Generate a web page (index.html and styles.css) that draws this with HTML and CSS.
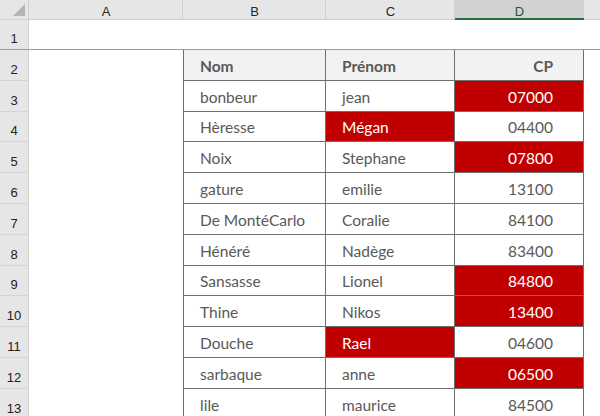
FILE: index.html
```html
<!DOCTYPE html>
<html lang="fr">
<head>
<meta charset="utf-8">
<link rel="stylesheet" href="styles.css">
</head>
<body>
<div class="sheet">
  <div class="corner"><span class="tri"></span></div>
  <div class="ch">A</div>
  <div class="ch">B</div>
  <div class="ch">C</div>
  <div class="ch sel">D</div>
  <div class="ch last"></div>

  <div class="rh r1">1</div>
  <div class="c r1"></div><div class="c r1"></div><div class="c r1"></div><div class="c r1"></div><div class="c r1"></div>

  <div class="rh">2</div>
  <div class="c"></div>
  <div class="t th first">Nom</div>
  <div class="t th">Prénom</div>
  <div class="t th num">CP</div>
  <div class="c"></div>

  <div class="rh">3</div><div class="c"></div>
  <div class="t first">bonbeur</div><div class="t">jean</div><div class="t num red">07000</div><div class="c"></div>

  <div class="rh">4</div><div class="c"></div>
  <div class="t first">Hèresse</div><div class="t red">Mégan</div><div class="t num">04400</div><div class="c"></div>

  <div class="rh">5</div><div class="c"></div>
  <div class="t first">Noix</div><div class="t">Stephane</div><div class="t num red">07800</div><div class="c"></div>

  <div class="rh">6</div><div class="c"></div>
  <div class="t first">gature</div><div class="t">emilie</div><div class="t num">13100</div><div class="c"></div>

  <div class="rh">7</div><div class="c"></div>
  <div class="t first">De MontéCarlo</div><div class="t">Coralie</div><div class="t num">84100</div><div class="c"></div>

  <div class="rh">8</div><div class="c"></div>
  <div class="t first">Hénéré</div><div class="t">Nadège</div><div class="t num">83400</div><div class="c"></div>

  <div class="rh">9</div><div class="c"></div>
  <div class="t first">Sansasse</div><div class="t">Lionel</div><div class="t num red">84800</div><div class="c"></div>

  <div class="rh">10</div><div class="c"></div>
  <div class="t first">Thine</div><div class="t">Nikos</div><div class="t num red">13400</div><div class="c"></div>

  <div class="rh">11</div><div class="c"></div>
  <div class="t first">Douche</div><div class="t red">Rael</div><div class="t num">04600</div><div class="c"></div>

  <div class="rh">12</div><div class="c"></div>
  <div class="t first">sarbaque</div><div class="t">anne</div><div class="t num red">06500</div><div class="c"></div>

  <div class="rh">13</div><div class="c"></div>
  <div class="t first">lile</div><div class="t">maurice</div><div class="t num">84500</div><div class="c"></div>
</div>
</body>
</html>
```

FILE: styles.css
```css
html, body {
  margin: 0;
  padding: 0;
  background: #ffffff;
  overflow: hidden;
}

.sheet {
  width: 600px;
  height: 416px;
  display: grid;
  grid-template-columns: 29px 154px 143px 129px 129px 1fr;
  grid-template-rows: 20px 30px repeat(12, 30.8px);
  font-family: Lato, "Noto Sans", sans-serif;
  overflow: hidden;
}

.corner {
  background: #e6e6e6;
  border-right: 1px solid #d0d0d0;
  border-bottom: 1px solid #cfcfcf;
  position: relative;
}

.tri {
  position: absolute;
  right: 3px;
  bottom: 3px;
  width: 0;
  height: 0;
  border-left: 12px solid transparent;
  border-bottom: 12px solid #b5b5b5;
}

.ch {
  background: #e6e6e6;
  border-bottom: 1px solid #cfcfcf;
  box-shadow: inset -1px 0 0 #d2d2d2;
  display: flex;
  align-items: center;
  justify-content: center;
  font-family: "Liberation Sans", Arial, sans-serif;
  font-size: 13px;
  color: #262626;
  padding-top: 4px;
  box-sizing: border-box;
}

.ch.sel {
  background: #d2d2d2;
  border-bottom: 2px solid #217346;
  color: #185a34;
  padding-top: 5px;
}

.ch.last {
  box-shadow: none;
}

.rh {
  background: #e6e6e6;
  border-right: 1px solid #d0d0d0;
  border-bottom: 1px solid #d4d4d4;
  display: flex;
  align-items: flex-end;
  justify-content: center;
  padding-bottom: 3px;
  box-sizing: border-box;
  font-family: "Liberation Sans", Arial, sans-serif;
  font-size: 13px;
  color: #222222;
}

.r1 {
  border-bottom: 1px solid #9c9c9c;
}

.c {
  background: #ffffff;
}

.t {
  box-sizing: border-box;
  border-right: 1px solid #6f6f6f;
  border-bottom: 1px solid #6f6f6f;
  display: flex;
  align-items: flex-end;
  padding: 0 12px 5px 16px;
  font-size: 15.5px;
  color: #595959;
  white-space: nowrap;
  background: #ffffff;
}

.t.first {
  border-left: 1px solid #6f6f6f;
}

.t.num {
  justify-content: flex-end;
  padding-right: 30px;
}

.t.th {
  background: #f2f2f2;
  font-weight: bold;
}

.t.red {
  background: #c00000;
  color: #ffffff;
}
```
